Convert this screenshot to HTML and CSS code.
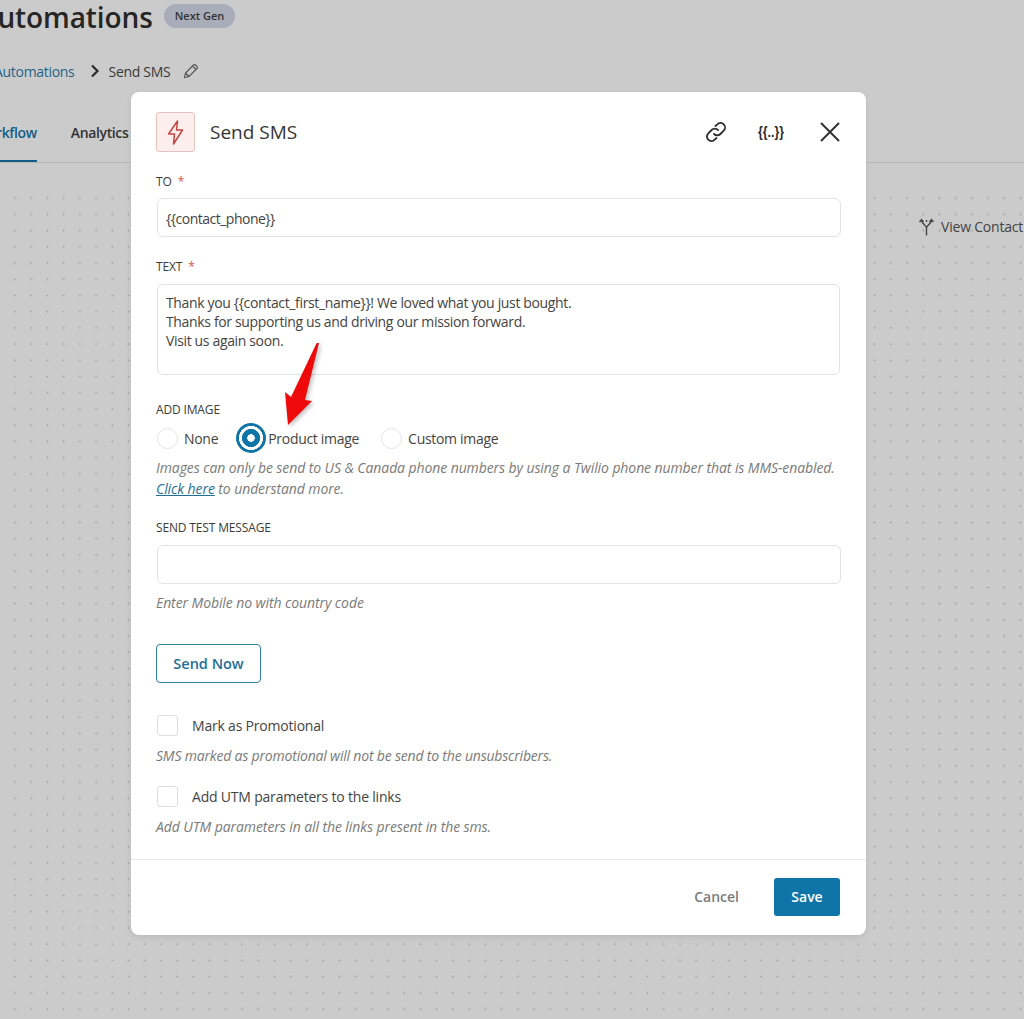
FILE: index.html
```html
<!DOCTYPE html>
<html lang="en">
<head>
<meta charset="utf-8">
<title>Send SMS</title>
<link rel="stylesheet" href="styles.css">
</head>
<body>
<div class="page">
  <header class="top">
    <div class="title-row"><h1>Automations</h1><span class="badge">Next Gen</span></div>
    <div class="crumbs">
      <a class="crumb-link">Automations</a>
      <svg class="chev" viewBox="0 0 12 14" width="12" height="14"><path d="M3 1.500l5.500 5.500-5.500 5.500" fill="none" stroke="#2b2b2b" stroke-width="2.200"/></svg>
      <span>Send SMS</span>
      <svg class="pencil" viewBox="0 0 16 16" width="16" height="16"><path d="M1.500 14.500l1-4.500 8-8a1.400 1.400 0 0 1 2 0l1.500 1.500a1.400 1.400 0 0 1 0 2l-8 8zM2.500 10l3.500 3.500M9.500 3l3.500 3.500" fill="none" stroke="#555" stroke-width="1.100"/></svg>
    </div>
    <nav class="tabs"><a class="tab active">Workflow</a><a class="tab">Analytics</a></nav>
  </header>
  <main class="canvas">
    <div class="view-contact">
      <svg viewBox="0 0 16 18" width="16" height="18"><path d="M8.500 17.500V10C8.500 7 4 7 3.500 2M8.500 10C8.500 7 13 7 13.500 2M1.500 4L3.500 1.500 5.500 4M11.500 4L13.500 1.500 15.500 4M8.500 2v2" fill="none" stroke="#444" stroke-width="1.400"/></svg>
      <span>View Contact</span>
    </div>
  </main>

  <section class="modal">
    <div class="modal-head">
      <span class="bolt"><svg viewBox="0 0 20 30" width="20" height="30"><path d="M11.500 4L2.500 17h6L7.500 27l9-14h-6z" fill="none" stroke="#c8443f" stroke-width="1.500" stroke-linejoin="round"/></svg></span>
      <h2>Send SMS</h2>
      <div class="head-icons">
        <svg class="i-link" viewBox="0 0 24 24" width="24" height="24"><path d="M10 14a4.500 4.500 0 0 0 6.400 0l3.300-3.300a4.500 4.500 0 0 0-6.400-6.400L11.500 6M14 10a4.500 4.500 0 0 0-6.400 0l-3.300 3.300a4.500 4.500 0 0 0 6.400 6.400l1.800-1.700" fill="none" stroke="#2b2b2b" stroke-width="1.800" stroke-linecap="round"/></svg>
        <svg class="i-merge" viewBox="0 0 26 18" width="26" height="18"><text class="merge-text" x="0" y="14" textLength="26" lengthAdjust="spacingAndGlyphs">{{..}}</text></svg>
        <svg class="i-close" viewBox="0 0 20 20" width="20" height="20"><path d="M1 1l18 18M19 1L1 19" stroke="#333" stroke-width="2" fill="none"/></svg>
      </div>
    </div>

    <div class="modal-body">
      <label class="label l-to">TO <i>*</i></label>
      <div class="field">{{contact_phone}}</div>

      <label class="label l-text">TEXT <i>*</i></label>
      <div class="area">Thank you {{contact_first_name}}! We loved what you just bought.<br>Thanks for supporting us and driving our mission forward.<br>Visit us again soon.</div>

      <label class="label l-img">ADD IMAGE</label>
      <div class="radios">
        <span class="radio"></span><span class="r-text r-none">None</span>
        <span class="radio on"></span><span class="r-text r-prod">Product image</span>
        <span class="radio"></span><span class="r-text">Custom image</span>
      </div>
      <p class="help h-img">Images can only be send to US &amp; Canada phone numbers by using a Twilio phone number that is MMS-enabled.<br><a>Click here</a> to understand more.</p>

      <label class="label l-test">SEND TEST MESSAGE</label>
      <div class="field empty"></div>
      <p class="help h-test">Enter Mobile no with country code</p>

      <button class="send">Send Now</button>

      <div class="check c1"><span class="box"></span><span>Mark as Promotional</span></div>
      <p class="help h-c1">SMS marked as promotional will not be send to the unsubscribers.</p>
      <div class="check c2"><span class="box"></span><span>Add UTM parameters to the links</span></div>
      <p class="help h-c2">Add UTM parameters in all the links present in the sms.</p>
    </div>

    <div class="modal-foot">
      <button class="cancel">Cancel</button>
      <button class="save">Save</button>
    </div>
  </section>

  <svg class="arrow" viewBox="0 0 50 100" width="50" height="100"><path d="M35 3L21 60l7 1L4 85 1 52l6 5L32.700 3z" fill="#ee0a0a"/></svg>
</div>
</body>
</html>
```
FILE: styles.css
```css
* { box-sizing: border-box; }
html, body { margin: 0; height: 100%; }
body { font-family: "Open Sans", "Noto Sans", sans-serif; color: #333; background: #cbcbcb; overflow: hidden; }
.page { position: relative; width: 1024px; height: 1019px; overflow: hidden; display: flex; flex-direction: column; }

.top { height: 163px; border-bottom: 1px solid #b8b8b8; flex: none; overflow: hidden; }
.title-row { display: flex; align-items: center; gap: 11px; margin-left: -21px; height: 34px; }
h1 { margin: 0; font-size: 28px; line-height: 34px; font-weight: 600; color: #262626; letter-spacing: -.1px; }
.badge { background: #a9adb9; color: #333; border-radius: 12px; font-size: 11px; font-weight: 600; height: 24px; line-height: 24px; padding: 0 11px; margin-top: -3px; }
.crumbs { display: flex; align-items: center; margin: 21px 0 0 -6px; font-size: 14px; height: 32px; letter-spacing: -.3px; color: #3a3a3a; }
.crumb-link { color: #1f6488; }
.chev { margin: 0 8px 0 14px; }
.pencil { margin-left: 13px; }
.tabs { display: flex; gap: 34px; margin: 13px 0 0 -25px; font-size: 14px; font-weight: 600; letter-spacing: -.37px; }
.tab { padding-top: 23px; color: #333; height: 62px; }
.tab.active { color: #125e88; border-bottom: 2px solid #125e88; }

.canvas { flex: 1; position: relative; padding-top: 27px; background-color: #cbcbcb; background-image: radial-gradient(circle, #a9a9a9 0, #a9a9a9 .7px, transparent 1.400px); background-size: 16.230px 16.230px; background-position: 6.900px 0; background-origin: content-box; background-clip: content-box; }
.view-contact { position: absolute; left: 918px; top: 54px; display: flex; align-items: center; gap: 7px; font-size: 14px; color: #444; white-space: nowrap; letter-spacing: -.2px; }

.modal { position: absolute; left: 131px; top: 92px; width: 735px; height: 843px; background: #fff; border-radius: 8px; box-shadow: 0 2px 6px rgba(0,0,0,.08); display: flex; flex-direction: column; }
.modal-head { display: flex; align-items: center; height: 80px; padding: 0 26px 0 25px; flex: none; }
.bolt { width: 39px; height: 40px; border: 1px solid #e6c3bd; background: #fceeec; border-radius: 3px; display: flex; align-items: center; justify-content: center; }
h2 { margin: 0 0 0 15px; font-size: 19px; font-weight: 500; color: #353535; }
.head-icons { margin-left: auto; display: flex; align-items: center; }
.i-merge { margin-left: 30px; }
.merge-text { font-family: "Liberation Sans", sans-serif; font-weight: 700; font-size: 15px; fill: #2b2b2b; }
.i-close { margin-left: 36px; }

.modal-body { flex: 1; padding: 0 25px; display: flex; flex-direction: column; align-items: flex-start; }
.label { display: block; font-size: 12px; line-height: 16px; color: #3c3c3c; letter-spacing: -.15px; text-transform: uppercase; }
.label i { color: #d9534f; font-style: normal; margin-left: 3px; }
.l-to { margin-top: 2px; }
.field { width: 684px; height: 39px; margin: 8px 0 0 1px; border: 1px solid #e3e3e3; border-radius: 6px; padding: 0 8px; font-size: 14px; line-height: 39px; letter-spacing: -.5px; color: #444; }
.field.empty { margin-top: 9px; }
.l-text { margin-top: 22px; }
.area { width: 683px; height: 91px; margin: 9px 0 0 1px; border: 1px solid #e3e3e3; border-radius: 6px; padding: 8px; font-size: 14px; line-height: 19px; letter-spacing: -.35px; color: #444; }
.l-img { margin-top: 27px; }
.radios { display: flex; align-items: center; height: 30px; margin: 5px 0 0 1px; font-size: 14px; letter-spacing: -.3px; color: #444; }
.radio { width: 21px; height: 21px; border: 1px solid #e3e3e3; border-radius: 50%; flex: none; }
.radio.on { width: 30px; height: 30px; border: 0; background: radial-gradient(circle, #fff 0 3.500px, #0f75a8 4px 8.800px, #fff 9.300px 11.800px, #0f75a8 12.300px 15px, transparent 15.300px); }
.r-text { margin-left: 6px; }
.r-none { margin-right: 18px; }
.r-prod { margin-left: 2px; margin-right: 22px; }
.help { margin: 0; font-size: 14px; line-height: 21px; font-style: italic; color: #7a7a7a; letter-spacing: -.09px; width: 690px; }
.help a { color: #1f6f99; text-decoration: underline; }
.h-img { margin-top: 4px; }
.l-test { margin-top: 21px; }
.h-test { margin-top: 8px; }
.send { margin-top: 31px; width: 105px; height: 39px; background: #fff; border: 1px solid #2e7fa6; border-radius: 4px; color: #1f6f99; font: 600 14.500px "Open Sans", sans-serif; }
.check { display: flex; align-items: center; font-size: 14px; gap: 14px; color: #444; margin-left: 1px; letter-spacing: -.2px; }
.box { width: 21px; height: 21px; border: 1px solid #dedede; border-radius: 3px; flex: none; }
.c1 { margin-top: 32px; }
.h-c1 { margin-top: 9px; letter-spacing: -.19px; }
.c2 { margin-top: 20px; }
.h-c2 { margin-top: 9px; }

.modal-foot { height: 76px; border-top: 1px solid #e8e8e8; display: flex; align-items: center; justify-content: flex-end; padding: 0 26px 2px 0; flex: none; }
.cancel { background: none; border: 0; padding: 0; color: #7c7c7c; font: 600 14px "Open Sans", sans-serif; margin-right: 35px; }
.save { width: 66px; height: 38px; background: #0f75a8; color: #fff; border: 0; border-radius: 3px; font: 600 14px "Open Sans", sans-serif; }

.arrow { position: absolute; left: 284px; top: 340px; filter: drop-shadow(2px 2px 2px rgba(0,0,0,.25)); }
```
